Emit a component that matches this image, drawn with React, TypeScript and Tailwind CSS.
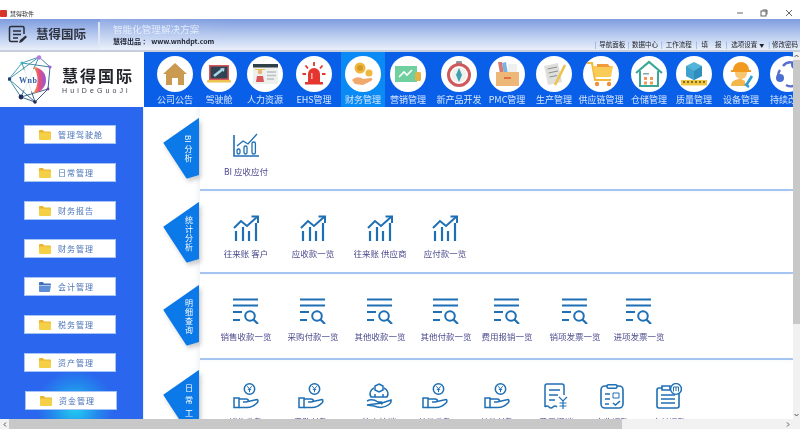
import React from "react";

const navIcons: Record<string, React.ReactNode> = {
  home: (<g><path d="M18 7 L30 18 L27 18 L27 29 L21 29 L21 22 L15 22 L15 29 L9 29 L9 18 L6 18 Z" fill="#c99a4f" /></g>),
  drive: (<g><rect x="8" y="9" width="20" height="15" fill="#d9555a" /><rect x="9.5" y="10.5" width="17" height="12" fill="#2f4352" /><path d="M13 20 L22 13" stroke="#a8d5e8" strokeWidth="2.5" /><path d="M19 12.5 L23.5 12 L23 16 Z" fill="#a8d5e8" /><rect x="6" y="24" width="24" height="2.5" rx="1" fill="#eec24f" /></g>),
  card: (<g><rect x="6" y="9" width="25" height="19" fill="#eef0ee" /><rect x="6" y="8" width="25" height="3.5" fill="#2f3f48" /><circle cx="13" cy="16" r="2.3" fill="#eab676" /><path d="M9 26 L10 20 L16 20 L17 26 Z" fill="#d9555a" /><rect x="8" y="13" width="10" height="1" fill="#eec24f" /><path d="M20 16 H29 M20 19.5 H29 M20 23 H27" stroke="#b9bfc2" strokeWidth="1.6" /></g>),
  alarm: (<g><path d="M12 26 V18 A6 6 0 0 1 24 18 V26 Z" fill="#e4352f" /><rect x="9" y="26" width="18" height="2.5" fill="#e4352f" /><path d="M18 6 V10 M9.5 9.5 L12 12.5 M26.5 9.5 L24 12.5 M6.5 18 H10 M26 18 H29.5" stroke="#e4352f" strokeWidth="1.8" /><rect x="15" y="17" width="1.6" height="6" fill="#f6a9a5" /></g>),
  coins: (<g><circle cx="15" cy="12" r="5.5" fill="#eeb83c" /><circle cx="15" cy="12" r="3" fill="#d8992a" /><circle cx="24" cy="17" r="3.5" fill="#eeb83c" /><path d="M7 24 C11 20 15 21 18 23 L25 22 C28 22 28 24 26 25 L18 29 L10 28 Z" fill="#f0a96a" /></g>),
  money: (<g><rect x="5" y="10" width="22" height="16" fill="#6fcf9f" /><path d="M9 21 L14 16 L17 19 L22 14" stroke="#fff" strokeWidth="1.6" fill="none" /><rect x="25" y="16" width="6" height="9" rx="1.5" fill="#e3b347" /></g>),
  compass: (<g><rect x="15" y="5" width="6" height="3" rx="1" fill="#8a9a9c" /><circle cx="18" cy="19" r="10.5" fill="none" stroke="#cf5a5c" strokeWidth="3" /><circle cx="18" cy="19" r="7.5" fill="#f2f0ea" /><path d="M18 12 L21 19 L18 26 L15 19 Z" fill="#3f9fb5" /></g>),
  box: (<g><path d="M9 6 L13 6 L15 18 L11 18 Z" fill="#d97a70" /><path d="M13 7 L17 6 L19 18 L15 18 Z" fill="#79b4dd" /><path d="M19 8 H28 V18 H19 Z" fill="#eef0f0" /><rect x="7" y="16" width="23" height="14" fill="#edb778" /><rect x="15" y="21" width="7" height="2" fill="#df6f3b" /></g>),
  doc: (<g><path d="M8 10 L22 7 L26 26 L12 29 Z" fill="#dfe0dc" /><path d="M11.5 13 L21 11 M12.5 17 L22 15 M13.5 21 L21 19.5" stroke="#8b8f8d" strokeWidth="1" /><path d="M29 9 L19 29" stroke="#eec24f" strokeWidth="2.6" /></g>),
  cart: (<g><path d="M4 7 H9 L12 24 H28" stroke="#f3b83c" strokeWidth="2" fill="none" /><path d="M10 10 H30 L28 21 H12 Z" fill="#f8cc57" /><path d="M14 8 H25 L27 11 H14 Z" fill="#f29a3a" /><circle cx="14" cy="28" r="2.2" fill="#ef8f3a" /><circle cx="26" cy="28" r="2.2" fill="#ef8f3a" /></g>),
  house: (<g><path d="M5 17 L18 6 L31 17" stroke="#3aa897" strokeWidth="2.2" fill="none" /><path d="M9 15 V30 H27 V15" stroke="#3aa897" strokeWidth="2" fill="none" /><rect x="12" y="17" width="6" height="1.5" fill="#7fa9a2" /><path d="M13 21 h3 v3 h-3 Z M19 21 h3 v3 h-3 Z M13 25.5 h3 v3 h-3 Z M19 25.5 h3 v3 h-3 Z" fill="#ef9a5a" /></g>),
  cube: (<g><path d="M18 6 L26 10 L26 20 L18 24 L10 20 L10 10 Z" fill="#52b4d9" /><path d="M18 15 L26 10 L26 20 L18 24 Z" fill="#2f8dbd" /><path d="M18 15 L10 10 L10 20 L18 24 Z" fill="#3fa0cd" /><rect x="5" y="24" width="26" height="5.5" fill="#f0c63f" /><path d="M7 26 H29" stroke="#5b5030" strokeWidth="1.6" strokeDasharray="2 2" /></g>),
  worker: (<g><path d="M10 14 A8 8 0 0 1 26 14 L28 14 V16 H8 V14 Z" fill="#f29a1f" /><path d="M12 16 H24 C24 21 21 23 18 23 C15 23 12 21 12 16 Z" fill="#f7c66f" /><path d="M8 30 C8 25 12 23 18 23 L22 25 V30 Z" fill="#f4b64a" /><path d="M29 20 L24 28 M22 28 L26 31" stroke="#2f9fd0" strokeWidth="2.6" fill="none" /></g>),
  nodes: (<g><path d="M10 14 A10 10 0 0 0 9 24 M24 7 A10 10 0 0 0 13 10 M16 29 A10 10 0 0 0 27 28" stroke="#5c6ed0" strokeWidth="2.4" fill="none" /><circle cx="25" cy="9" r="4" fill="#4a6fd0" /><circle cx="10" cy="22" r="4" fill="#4a6fd0" /><circle cx="28" cy="26" r="3" fill="#4a6fd0" /></g>),
};

const navItems = [
  { icon: "home", label: "公司公告", ml: "ml-0", active: false },
  { icon: "drive", label: "驾驶舱", ml: "ml-0", active: false },
  { icon: "card", label: "人力资源", ml: "ml-[2px]", active: false },
  { icon: "alarm", label: "EHS管理", ml: "ml-[5px]", active: false },
  { icon: "coins", label: "财务管理", ml: "ml-[5px]", active: true },
  { icon: "money", label: "营销管理", ml: "ml-px", active: false },
  { icon: "compass", label: "新产品开发", ml: "ml-[7px]", active: false },
  { icon: "box", label: "PMC管理", ml: "ml-[4px]", active: false },
  { icon: "doc", label: "生产管理", ml: "ml-[3px]", active: false },
  { icon: "cart", label: "供应链管理", ml: "ml-[3px]", active: false },
  { icon: "house", label: "仓储管理", ml: "ml-[4px]", active: false },
  { icon: "cube", label: "质量管理", ml: "ml-px", active: false },
  { icon: "worker", label: "设备管理", ml: "ml-[3px]", active: false },
  { icon: "nodes", label: "持续改进", ml: "ml-[3px]", active: false },
];

const sideItems = [
  { label: "管理驾驶舱", open: false, ml: "ml-[24px]" },
  { label: "日常管理", open: false, ml: "ml-[24px]" },
  { label: "财务报告", open: false, ml: "ml-[24px]" },
  { label: "财务管理", open: false, ml: "ml-[24px]" },
  { label: "会计管理", open: true, ml: "ml-[24px]" },
  { label: "税务管理", open: false, ml: "ml-[24px]" },
  { label: "资产管理", open: false, ml: "ml-[24px]" },
  { label: "资金管理", open: false, ml: "ml-[25px]" },
];

function Folder({ open }: { open: boolean }) {
  if (open)
    return (
      <svg width="12" height="10" viewBox="0 0 12 10">
        <path d="M0 1 Q0 0 1 0 H4 L5 1.5 H11 Q12 1.5 12 2.5 V3 H0 Z" fill="#3f6fb8" />
        <path d="M0 3.5 H12 L11 9 Q11 10 10 10 H1 Q0 10 0 9 Z" fill="#5d8ed6" />
      </svg>
    );
  return (
    <svg width="12" height="10" viewBox="0 0 12 10">
      <path d="M0 1 Q0 0 1 0 H4 L5 1.5 H11 Q12 1.5 12 2.5 V4 H0 Z" fill="#e8b52b" />
      <rect x="0" y="2.5" width="12" height="7.5" rx="1" fill="#f5cf45" />
    </svg>
  );
}

const C = "#1f6fb5";

function BiIcon() {
  return (
    <svg width="26" height="26" viewBox="0 0 26 26" fill="none" stroke={C} strokeWidth="1.3">
      <path d="M1 2 V23 H26" strokeWidth="1.6" />
      <path d="M4 13 L10 8 L15 11 L24 1" />
      <rect x="4" y="16" width="3" height="5" rx="1.4" />
      <rect x="11" y="13" width="3" height="8" rx="1.4" />
      <rect x="19" y="9" width="3.4" height="12" rx="1.6" />
    </svg>
  );
}
function StatIcon() {
  return (
    <svg width="26" height="26" viewBox="0 0 26 26" fill="none" stroke={C}>
      <path d="M1 13 L8 6 L14 11 L24 2" strokeWidth="2" />
      <path d="M18.5 1.5 H25 V8" strokeWidth="2" />
      <path d="M3 16 V26 M10 12 V26 M16 16 V26 M23 8 V26" strokeWidth="2.2" />
    </svg>
  );
}
function SearchIcon() {
  return (
    <svg width="26" height="26" viewBox="0 0 26 26" fill="none" stroke={C}>
      <path d="M0 1.5 H25 M0 7.5 H25 M0 14 H9 M0 22 H7" strokeWidth="2" />
      <circle cx="17" cy="18" r="4.8" strokeWidth="2" />
      <path d="M20.5 21.5 L25 26" strokeWidth="2.2" />
    </svg>
  );
}
function HandYenIcon() {
  return (
    <svg width="26" height="26" viewBox="0 0 26 26" fill="none" stroke={C} strokeWidth="1.5">
      <circle cx="16.5" cy="6" r="5.2" />
      <path d="M14.3 3.2 L16.5 6 L18.7 3.2 M16.5 6 V9.2 M14.8 6.6 H18.2" strokeWidth="1" />
      <rect x="1" y="15" width="5" height="9.5" />
      <path d="M6 16 H13 C16 16 16 19 13 19 H10 M15 18.5 L24 16.5 C25.5 17 25 19 24 20 C21 23 18 24.5 14 24.5 H6" />
    </svg>
  );
}
function PeopleIcon() {
  return (
    <svg width="26" height="26" viewBox="0 0 26 26" fill="none" stroke={C} strokeWidth="1.5">
      <path d="M13 1 L17 3 V7 L13 9 L9 7 V3 Z" />
      <path d="M8 5 C4 7 3 11 5 14 H21 C23 11 22 7 18 5 M9 11 V14 M17 11 V14" />
      <path d="M1 18 C5 16 9 17 12 19 H15 C17 19 17 21 15 21 M16 20 L25 17 C25.5 19 25 20 23 21.5 C19 24.5 13 25 8 23 L1 22 Z" />
    </svg>
  );
}
function FeeIcon() {
  return (
    <svg width="26" height="26" viewBox="0 0 26 26" fill="none" stroke={C} strokeWidth="1.5">
      <path d="M2 24 V3 Q2 1 4 1 H19 Q21 1 21 3 V12 M2 24 Q4 22 6 24 Q8 26 10 24 Q12 22 14 24" />
      <path d="M6 7 H17 M6 12 H15 M6 17 H12" />
      <path d="M16 14 L20 18 L24 14 M20 18 V26 M16.5 20 H23.5 M16.5 23 H23.5" strokeWidth="1.2" />
    </svg>
  );
}
function CheckIcon() {
  return (
    <svg width="24" height="25" viewBox="0 0 24 25" fill="none" stroke={C} strokeWidth="1.6">
      <rect x="1" y="2" width="22" height="22" rx="4" />
      <rect x="7" y="0.8" width="10" height="3.4" rx="1.5" fill="#fff" />
      <path d="M5 10 H10 M5 15 H10 M5 20 H9" />
      <path d="M13 9 H19 V14 H13 Z" strokeWidth="1" />
      <path d="M13 19 L15.5 21 L20 17" />
    </svg>
  );
}
function BadgeIcon() {
  return (
    <svg width="26" height="26" viewBox="0 0 26 26" fill="none" stroke={C} strokeWidth="1.6">
      <path d="M18 5 H21 Q23 5 23 7 V23 Q23 25 21 25 H3 Q1 25 1 23 V7 Q1 5 3 5 H6" />
      <path d="M6 3 H14 V7 H6 Z" />
      <path d="M5 12 H19 M5 16 H19 M5 20 H19" />
      <circle cx="20" cy="6" r="5.4" fill="#fff" strokeWidth="1.4" />
      <path d="M17.5 4 H22.5 V8.5 M17.5 4 V8.5 M20 4 V8" strokeWidth="1" />
    </svg>
  );
}

type Tile = { icon: React.ReactNode; label: string; ml: string };

const sections: {
  tag: React.ReactNode;
  h: string;
  pt: string;
  tagPt: string;
  tiles: Tile[];
  last?: boolean;
}[] = [
  {
    tag: (
      <span className="flex flex-col items-center text-[8px] leading-[9px]">
        <span className="[writing-mode:vertical-rl] mb-[2px] leading-[9px]">BI</span>
        <span>分</span>
        <span>析</span>
      </span>
    ),
    h: "h-[84px]",
    pt: "pt-[26px]",
    tagPt: "pt-[11px]",
    tiles: [{ icon: <BiIcon />, label: "BI 应收应付", ml: "ml-0" }],
  },
  {
    tag: (
      <span className="flex flex-col items-center text-[8px] leading-[9px]">
        <span>统</span><span>计</span><span>分</span><span>析</span>
      </span>
    ),
    h: "h-[83px]",
    pt: "pt-[24px]",
    tagPt: "pt-[11px]",
    tiles: [
      { icon: <StatIcon />, label: "往来账 客户", ml: "ml-0" },
      { icon: <StatIcon />, label: "应收款一览", ml: "ml-px" },
      { icon: <StatIcon />, label: "往来账 供应商", ml: "ml-px" },
      { icon: <StatIcon />, label: "应付款一览", ml: "ml-[-1px]" },
    ],
  },
  {
    tag: (
      <span className="flex flex-col items-center text-[8px] leading-[9px]">
        <span>明</span><span>细</span><span>查</span><span>询</span>
      </span>
    ),
    h: "h-[86px]",
    pt: "pt-[24px]",
    tagPt: "pt-[11px]",
    tiles: [
      { icon: <SearchIcon />, label: "销售收款一览", ml: "ml-0" },
      { icon: <SearchIcon />, label: "采购付款一览", ml: "ml-px" },
      { icon: <SearchIcon />, label: "其他收款一览", ml: "ml-px" },
      { icon: <SearchIcon />, label: "其他付款一览", ml: "ml-0" },
      { icon: <SearchIcon />, label: "费用报销一览", ml: "ml-[-5px]" },
      { icon: <SearchIcon />, label: "销项发票一览", ml: "ml-[2px]" },
      { icon: <SearchIcon />, label: "进项发票一览", ml: "ml-[-2px]" },
    ],
  },
  {
    tag: (
      <span className="flex flex-col items-center text-[8px] leading-[12.5px] pt-[12px]">
        <span>日</span><span>常</span><span>工</span><span>作</span>
      </span>
    ),
    h: "flex-1",
    pt: "pt-[23px]",
    tagPt: "pt-[10px]",
    last: true,
    tiles: [
      { icon: <HandYenIcon />, label: "销售收款", ml: "ml-0" },
      { icon: <HandYenIcon />, label: "采购付款", ml: "ml-[-1px]" },
      { icon: <PeopleIcon />, label: "往来核销", ml: "ml-[2px]" },
      { icon: <HandYenIcon />, label: "其他收款", ml: "ml-[-10px]" },
      { icon: <HandYenIcon />, label: "其他付款", ml: "ml-[-4px]" },
      { icon: <FeeIcon />, label: "费用报销", ml: "ml-[-7px]" },
      { icon: <CheckIcon />, label: "应收调整", ml: "ml-[-10px]" },
      { icon: <BadgeIcon />, label: "应付调整", ml: "ml-[-9px]" },
    ],
  },
];

function Tag({ children }: { children: React.ReactNode }) {
  return (
    <div className="relative w-[36px] h-[61px] flex items-center justify-end pr-[6px] text-white">
      <svg className="absolute inset-0 drop-shadow-[2px_3px_2px_rgba(0,0,0,0.2)]" width="36" height="61" viewBox="0 0 36 61">
        <path d="M36 1 L1.5 25 L24 59.5 L36 56 Z" fill="#0b79e8" stroke="#0b79e8" strokeWidth="2" strokeLinejoin="round" />
      </svg>
      <span className="relative">{children}</span>
    </div>
  );
}

function Logo() {
  return (
    <svg width="48" height="50" viewBox="0 0 48 50" fill="none">
      <defs>
        <linearGradient id="lg" x1="0" y1="0" x2="1" y2="1">
          <stop offset="0" stopColor="#38b6c8" />
          <stop offset="1" stopColor="#22305f" />
        </linearGradient>
        <linearGradient id="dg" x1="0" y1="0" x2="1" y2="0">
          <stop offset="0" stopColor="#f0a13c" />
          <stop offset="0.5" stopColor="#e64d7c" />
          <stop offset="1" stopColor="#8a5be0" />
        </linearGradient>
      </defs>
      <path d="M31 2 L42 12 L40 34 L27 47 L13 42 L1 24 L14 8 Z M31 2 L1 24 M14 8 L42 12 M1 24 L27 47 M13 42 L40 34 M31 2 L13 42 M14 8 L27 47" stroke="url(#lg)" strokeWidth="0.9" />
      <circle cx="31" cy="2.5" r="2.2" fill="#b57be0" />
      <circle cx="14" cy="8" r="1.6" fill="#35b4c8" />
      <circle cx="42" cy="12" r="1.6" fill="#a05fe0" />
      <circle cx="1.5" cy="24" r="1.8" fill="#2a3f7a" />
      <circle cx="13" cy="42" r="2.4" fill="#1f2c5c" />
      <circle cx="27" cy="47" r="1.8" fill="#1f2c5c" />
      <circle cx="40" cy="34" r="1.4" fill="#6a3fb0" />
      <circle cx="22" cy="25" r="11.5" fill="#fff" fillOpacity="0.85" />
      <path d="M25 12 A13 13 0 0 1 25 38 C31 32 31 18 25 12 Z" fill="url(#dg)" />
      <text x="11" y="28" fontSize="8" fontWeight="700" fill="#2f5fa8" fontFamily="'Liberation Serif', serif" letterSpacing="0.5">Wnb</text>
    </svg>
  );
}

export default function App() {
  return (
    <div className="w-[800px] h-[435px] overflow-hidden flex flex-col bg-white blur-[0.4px] font-['Noto_Sans_CJK_SC','Liberation_Sans',sans-serif]">
      {/* title bar */}
      <div className="h-[19px] flex items-center pt-[7px] bg-white shrink-0">
        <div className="w-[7px] h-[7px] bg-[#d8352a] rounded-[1px]" />
        <span className="ml-[3px] text-[6px] text-[#333]">慧得软件</span>
        <div className="ml-auto flex items-center text-[#444]">
          <svg width="8" height="8" viewBox="0 0 8 8" className="mr-[16px]"><path d="M1 4 H7" stroke="#555" strokeWidth="0.9" /></svg>
          <svg width="8" height="8" viewBox="0 0 8 8" className="mr-[17px]" fill="none" stroke="#555" strokeWidth="0.9"><rect x="1" y="2" width="5" height="5" /><path d="M2.5 1 H7 V5.5" /></svg>
          <svg width="8" height="8" viewBox="0 0 8 8" className="mr-[7px]"><path d="M1 1 L7 7 M7 1 L1 7" stroke="#555" strokeWidth="0.9" /></svg>
        </div>
      </div>

      {/* app header */}
      <div className="h-[33px] shrink-0 flex border-b-2 border-[#c6cedb] bg-gradient-to-b from-[#7f9ddf] via-[#b5c8ee] to-[#eaf0fa]">
        <div className="w-[100px] flex items-center border-r-2 border-[#dfe6f4] my-[3px]">
          <svg width="20" height="20" viewBox="0 0 20 20" fill="none" stroke="#2b2f38" strokeWidth="1.5" className="ml-[8px]">
            <path d="M16 9 V3 Q16 1.5 14.5 1.5 H3 Q1.5 1.5 1.5 3 V15 Q1.5 16.5 3 16.5 H10" />
            <path d="M5 6 H13 M5 9.5 H13 M5 13 H10" />
            <path d="M11 18 L12 15 L17.5 10.5 L19 12 L14 17 Z" fill="#2b2f38" stroke="none" />
          </svg>
          <span className="ml-[8px] text-[12.5px] font-bold text-[#2f3440] whitespace-nowrap">慧得国际</span>
        </div>
        <div className="w-[130px] pl-[13px] pt-[4px] flex flex-col bg-gradient-to-r from-[#ffffff22] to-transparent">
          <span className="text-[9.6px] leading-[13px] text-[#e4ecfb] whitespace-nowrap">智能化管理解决方案</span>
          <span className="text-[7px] leading-[10px] font-bold text-[#1c2230] whitespace-nowrap">慧得出品 ： www.wnhdpt.com</span>
        </div>
        <div className="ml-auto pr-[2px] pb-[1px] flex items-end text-[6.5px] leading-[9px] text-[#20242c] whitespace-nowrap">
          <span className="text-[#5b8fd6] mr-[3px]">|</span>
          <span>导航面板</span>
          <span className="text-[#5b8fd6] mx-[2.5px]">|</span>
          <span>数据中心</span>
          <span className="text-[#5b8fd6] mx-[3px]">|</span>
          <span>工作流程</span>
          <span className="text-[#5b8fd6] mx-[4px]">|</span>
          <span>填</span>
          <span className="ml-[7px]">报</span>
          <span className="text-[#5b8fd6] mx-[4px]">|</span>
          <span>选项设置</span>
          <span className="ml-[2px] mr-[2px] text-[5px]">▼</span>
          <span className="text-[#5b8fd6] mx-[2px]">|</span>
          <span>修改密码</span>
        </div>
      </div>

      {/* body */}
      <div className="h-[367px] shrink-0 flex">
        <div className="w-[793px] flex flex-col">
          {/* nav row */}
          <div className="h-[55px] shrink-0 flex">
            <div className="w-[144px] shrink-0 bg-white flex items-center pl-[8px]">
              <Logo />
              <div className="ml-[6px] flex flex-col">
                <span className="text-[16px] leading-[20px] font-bold text-[#23242a] tracking-[2px] whitespace-nowrap">慧得国际</span>
                <span className="mt-[1px] text-[7px] leading-[9px] text-[#3b3f4a] tracking-[3.1px] whitespace-nowrap font-['Liberation_Sans',sans-serif]">HuiDeGuoJi</span>
              </div>
            </div>
            <div className="flex-1 min-w-0 bg-[#0a5fe8] flex pl-[9px] overflow-hidden">
              {navItems.map((n) => (
                <div
                  key={n.label}
                  className={`w-[44px] shrink-0 flex flex-col items-center pt-[4px] ${n.ml} ${n.active ? "bg-[#0a8af5]" : ""}`}
                >
                  <div className="w-[36px] h-[36px] rounded-full bg-white shrink-0">
                    <svg width="36" height="36" viewBox="0 0 36 36">{navIcons[n.icon]}</svg>
                  </div>
                  <span className="mt-[2px] text-[9px] leading-[12px] text-[#d6e6ff] whitespace-nowrap">{n.label}</span>
                </div>
              ))}
            </div>
          </div>

          {/* lower row */}
          <div className="flex-1 min-h-0 flex">
            <div className="relative w-[144px] shrink-0 bg-[#2b66ef] border-r border-[#e8f0fc] pt-[18px] flex flex-col gap-[19px] overflow-hidden">
              <div className="absolute left-[36px] bottom-[-26px] w-[78px] h-[74px] rounded-full bg-[radial-gradient(circle,#22d0f0_0%,#1f9bea99_45%,transparent_72%)]" />
              {sideItems.map((s) => (
                <div
                  key={s.label}
                  className={`relative w-[92px] h-[19px] shrink-0 bg-white border border-[#a6c4f7] flex items-center pl-[14px] ${s.ml}`}
                >
                  <Folder open={s.open} />
                  <span className="ml-[7px] text-[8px] tracking-[1px] text-[#4a73b8] whitespace-nowrap">{s.label}</span>
                </div>
              ))}
            </div>

            <div className="flex-1 min-w-0 flex flex-col overflow-hidden bg-white">
              {sections.map((sec, i) => (
                <div key={i} className={`flex shrink-0 ${sec.h} ${sec.last ? "min-h-0" : ""}`}>
                  <div className={`w-[56px] shrink-0 pl-[19px] ${sec.tagPt}`}>
                    <Tag>{sec.tag}</Tag>
                  </div>
                  <div
                    className={`flex-1 min-w-0 flex pl-[13px] ${sec.pt} ${sec.last ? "" : "border-b-2 border-[#a9c7f3]"} shadow-[-3px_0_4px_rgba(90,120,170,0.08)]`}
                  >
                    {sec.tiles.map((t) => (
                      <div key={t.label} className={`w-[66px] shrink-0 flex flex-col items-center ${t.ml}`}>
                        <div className="h-[26px] flex items-center justify-center shrink-0">{t.icon}</div>
                        <span className="mt-[6px] text-[8.5px] leading-[12px] text-[#4b4a8c] whitespace-nowrap">{t.label}</span>
                      </div>
                    ))}
                  </div>
                </div>
              ))}
            </div>
          </div>
        </div>

        {/* vertical scrollbar */}
        <div className="w-[7px] shrink-0 bg-[#f1f1f1] flex flex-col items-center">
          <div className="h-[8px] flex items-center justify-center text-[#555]">
            <svg width="5" height="4" viewBox="0 0 5 4"><path d="M0.5 3 L2.5 1 L4.5 3" stroke="#444" fill="none" strokeWidth="0.9" /></svg>
          </div>
          <div className="w-full h-[264px] bg-[#c8c8c8]" />
          <div className="mt-auto mb-[2px]">
            <svg width="5" height="4" viewBox="0 0 5 4"><path d="M0.5 1 L2.5 3 L4.5 1" stroke="#444" fill="none" strokeWidth="0.9" /></svg>
          </div>
        </div>
      </div>

      {/* horizontal scrollbar */}
      <div className="h-[10px] shrink-0 flex items-center bg-[#f1f1f1]">
        <div className="w-[9px] flex justify-center shrink-0">
          <svg width="4" height="5" viewBox="0 0 4 5"><path d="M3 0.5 L1 2.5 L3 4.5" stroke="#444" fill="none" strokeWidth="0.9" /></svg>
        </div>
        <div className="w-[613px] h-full bg-[#c8c8c8]" />
        <div className="ml-auto mr-[10px]">
          <svg width="4" height="5" viewBox="0 0 4 5"><path d="M1 0.5 L3 2.5 L1 4.5" stroke="#444" fill="none" strokeWidth="0.9" /></svg>
        </div>
      </div>
    </div>
  );
}
